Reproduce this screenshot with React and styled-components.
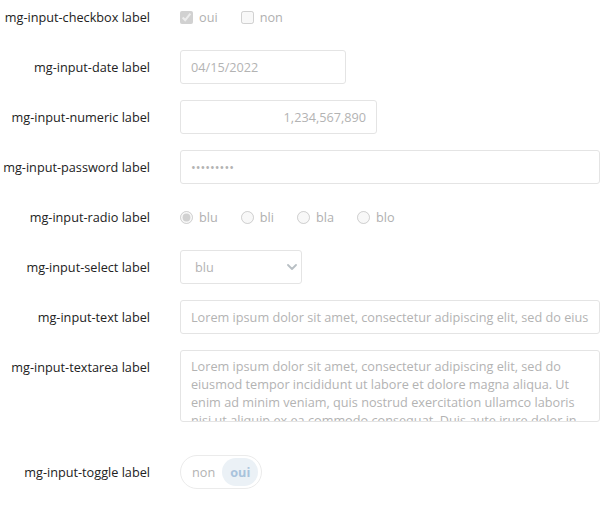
import React from "react";
import styled, { createGlobalStyle } from "styled-components";

const FONT = `"Open Sans", "Liberation Sans", sans-serif`;
const SIZE = "12.7px";

const Global = createGlobalStyle`
  html, body { margin: 0; padding: 0; background: #fff; }
  body { font-family: ${FONT}; font-size: ${SIZE}; color: #222; }
  * { box-sizing: border-box; }
`;

const Form = styled.div`
  display: grid;
  grid-template-columns: 150px 420px;
  column-gap: 30px;
  row-gap: 16px;
  align-items: start;
  width: 600px;
`;

const Label = styled.label`
  text-align: right;
  line-height: 34px;
  height: 34px;
  white-space: nowrap;
  color: #222;
  margin-top: ${(p) => (p.$spaced ? "17px" : "0")};
`;

const Field = styled.div`
  min-height: 34px;
  display: flex;
  align-items: center;
  margin-top: ${(p) => (p.$spaced ? "17px" : "0")};
`;

const Options = styled.div`
  display: flex;
  align-items: center;
  gap: 23px;
`;

const Option = styled.label`
  display: flex;
  align-items: center;
  gap: 6px;
  color: #b0b0b0;
  line-height: 18px;
`;

const Check = styled.input`
  margin: 0;
  width: 13px;
  height: 13px;
`;

const TextInput = styled.input`
  height: 34px;
  width: ${(p) => p.$width || "100%"};
  padding: 0 10px;
  border: 1px solid #e4e4e4;
  border-radius: 3px;
  background: #fff;
  font-family: ${FONT};
  font-size: ${SIZE};
  color: #b3b3b3;
  -webkit-text-fill-color: #b3b3b3;
  text-align: ${(p) => p.$align || "left"};
  outline: none;
  &:disabled { opacity: 1; }
`;

const SelectWrap = styled.div`
  position: relative;
  width: 122px;
  height: 34px;
`;

const Select = styled.select`
  appearance: none;
  width: 100%;
  height: 34px;
  padding: 0 24px 0 14px;
  border: 1px solid #e4e4e4;
  border-radius: 3px;
  background: #fff;
  font-family: ${FONT};
  font-size: ${SIZE};
  color: #b3b3b3;
  opacity: 1;
`;

const Chevron = styled.svg`
  position: absolute;
  right: 5px;
  top: 14px;
  width: 10px;
  height: 6px;
  pointer-events: none;
`;

const TextArea = styled.textarea`
  display: block;
  width: 100%;
  height: 72px;
  padding: 6px 10px;
  border: 1px solid #e4e4e4;
  border-radius: 3px;
  background: #fff;
  font-family: ${FONT};
  font-size: ${SIZE};
  line-height: 18px;
  color: #b3b3b3;
  -webkit-text-fill-color: #b3b3b3;
  resize: none;
  overflow: hidden;
`;

const Toggle = styled.div`
  display: inline-flex;
  align-items: center;
  height: 34px;
  padding: 2px 3px 2px 11px;
  border: 1px solid #ebebeb;
  border-radius: 17px;
  gap: 7px;
`;

const ToggleItem = styled.span`
  display: inline-flex;
  align-items: center;
  justify-content: center;
  height: 28px;
  padding: ${(p) => (p.$active ? "0 8px" : "0")};
  border-radius: 14px;
  background: ${(p) => (p.$active ? "#ebf1f6" : "transparent")};
  color: ${(p) => (p.$active ? "#a9c3dc" : "#b3b3b3")};
  font-weight: ${(p) => (p.$active ? 700 : 400)};
`;

const lorem =
  "Lorem ipsum dolor sit amet, consectetur adipiscing elit, sed do eiusmod tempor incididunt ut labore et dolore magna aliqua. Ut enim ad minim veniam, quis nostrud exercitation ullamco laboris nisi ut aliquip ex ea commodo consequat. Duis aute irure dolor in reprehenderit in voluptate velit esse cillum dolore eu fugiat nulla pariatur.";

export default function App() {
  return (
    <>
      <Global />
      <Form>
        <Label>mg-input-checkbox label</Label>
        <Field>
          <Options>
            <Option><Check type="checkbox" disabled defaultChecked />oui</Option>
            <Option><Check type="checkbox" disabled />non</Option>
          </Options>
        </Field>

        <Label>mg-input-date label</Label>
        <Field>
          <TextInput disabled $width="166px" defaultValue="04/15/2022" />
        </Field>

        <Label>mg-input-numeric label</Label>
        <Field>
          <TextInput disabled $width="197px" $align="right" defaultValue="1,234,567,890" />
        </Field>

        <Label>mg-input-password label</Label>
        <Field>
          <TextInput disabled type="password" defaultValue="password1" />
        </Field>

        <Label>mg-input-radio label</Label>
        <Field>
          <Options>
            {["blu", "bli", "bla", "blo"].map((v, i) => (
              <Option key={v}>
                <Check type="radio" name="radio" disabled defaultChecked={i === 0} />
                {v}
              </Option>
            ))}
          </Options>
        </Field>

        <Label>mg-input-select label</Label>
        <Field>
          <SelectWrap>
            <Select disabled defaultValue="blu">
              <option value="blu">blu</option>
              <option value="bli">bli</option>
              <option value="bla">bla</option>
              <option value="blo">blo</option>
            </Select>
            <Chevron viewBox="0 0 10 6">
              <path d="M1 1l4 4 4-4" fill="none" stroke="#b8bfc4" strokeWidth="1.8" strokeLinecap="round" strokeLinejoin="round" />
            </Chevron>
          </SelectWrap>
        </Field>

        <Label>mg-input-text label</Label>
        <Field>
          <TextInput disabled defaultValue={lorem} />
        </Field>

        <Label>mg-input-textarea label</Label>
        <Field>
          <TextArea disabled defaultValue={lorem} />
        </Field>

        <Label $spaced>mg-input-toggle label</Label>
        <Field $spaced>
          <Toggle>
            <ToggleItem>non</ToggleItem>
            <ToggleItem $active>oui</ToggleItem>
          </Toggle>
        </Field>
      </Form>
    </>
  );
}
